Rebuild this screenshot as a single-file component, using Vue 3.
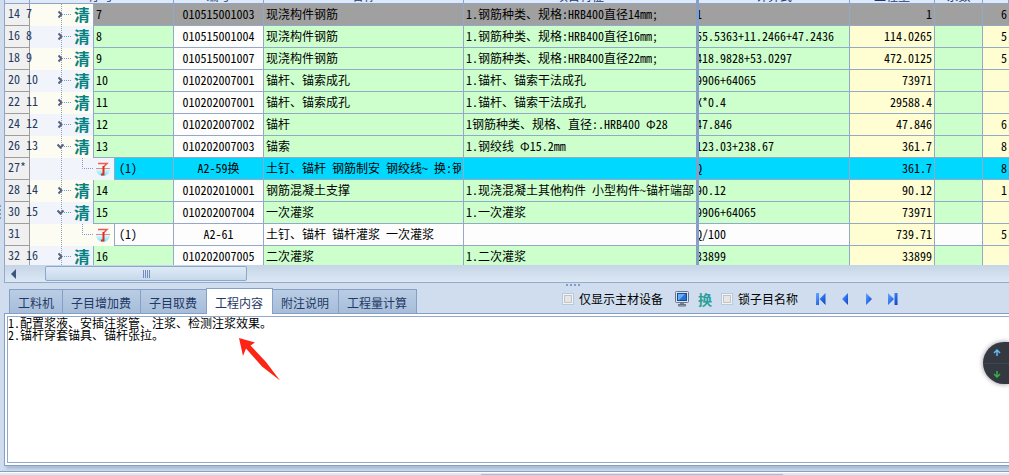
<script setup>
import { ref } from 'vue'

const headers = [
  { t: '', span: 1 },
  { t: '序号', span: 3 },
  { t: '编号', span: 1 },
  { t: '名称', span: 1 },
  { t: '项目特征', span: 1 },
  { t: '计算式', span: 1 },
  { t: '工程量', span: 1 },
  { t: '系数', span: 1 },
  { t: '', span: 1 },
]

const rows = [
  { line: '14 7', no: '7', code: '010515001003', name: '现浇构件钢筋', feat: '1.钢筋种类、规格:HRB400直径14mm;', expr: '1', qty: '1', price: '6,', gray: true },
  { line: '16 8', no: '8', code: '010515001004', name: '现浇构件钢筋', feat: '1.钢筋种类、规格:HRB400直径16mm;', expr: '55.5363+11.2466+47.2436', qty: '114.0265', price: '5,' },
  { line: '18 9', no: '9', code: '010515001007', name: '现浇构件钢筋', feat: '1.钢筋种类、规格:HRB400直径22mm;', expr: '418.9828+53.0297', qty: '472.0125', price: '5,' },
  { line: '20 10', no: '10', code: '010202007001', name: '锚杆、锚索成孔', feat: '1.锚杆、锚索干法成孔', expr: '9906+64065', qty: '73971', price: '' },
  { line: '22 11', no: '11', code: '010202007001', name: '锚杆、锚索成孔', feat: '1.锚杆、锚索干法成孔', expr: 'X*0.4', qty: '29588.4', price: '' },
  { line: '24 12', no: '12', code: '010202007002', name: '锚杆', feat: '1钢筋种类、规格、直径:.HRB400 Φ28', expr: '47.846', qty: '47.846', price: '6,' },
  { line: '26 13', no: '13', code: '010202007003', name: '锚索', feat: '1.钢绞线 Φ15.2mm', expr: '123.03+238.67', qty: '361.7', price: '8,', open: true },
  { line: '27*', no: '(1)', code: 'A2-59换', name: '土钉、锚杆 钢筋制安 钢绞线~ 换:钢绞线', feat: '', expr: 'Q', qty: '361.7', price: '8,', child: true, selected: true },
  { line: '28 14', no: '14', code: '010202010001', name: '钢筋混凝土支撑', feat: '1.现浇混凝土其他构件 小型构件~锚杆端部', expr: '90.12', qty: '90.12', price: '1,' },
  { line: '30 15', no: '15', code: '010202007004', name: '一次灌浆', feat: '1.一次灌浆', expr: '9906+64065', qty: '73971', price: '', open: true },
  { line: '31', no: '(1)', code: 'A2-61', name: '土钉、锚杆 锚杆灌浆 一次灌浆', feat: '', expr: 'Q/100', qty: '739.71', price: '5,', child: true },
  { line: '32 16', no: '16', code: '010202007005', name: '二次灌浆', feat: '1.二次灌浆', expr: '33899', qty: '33899', price: '' },
]

const tabs = ['工料机', '子目增加费', '子目取费', '工程内容', '附注说明', '工程量计算']
const active = ref('工程内容')
const content = ref('1.配置浆液、安插注浆管、注浆、检测注浆效果。\n2.锚杆穿套锚具、锚杆张拉。')
const onlyMain = ref(false)
const lockName = ref(false)
</script>

<template>
  <div class="app">
    <div class="side"><span class="grip"></span></div>
    <main class="main">
      <section class="grid">
        <table>
          <colgroup>
            <col class="c-line" /><col class="c-tree" /><col class="c-indent" /><col class="c-no" />
            <col class="c-code" /><col class="c-name" /><col class="c-feat" /><col class="c-expr" />
            <col class="c-qty" /><col class="c-coef" /><col />
          </colgroup>
          <thead>
            <tr>
              <th v-for="(h, i) in headers" :key="i" :colspan="h.span" :class="{ split: i === 4 }"><div>{{ h.t }}</div></th>
            </tr>
          </thead>
          <tbody>
            <tr v-for="r in rows" :key="r.line" :class="{ gray: r.gray, child: r.child, selected: r.selected }">
              <td class="line"><div>{{ r.line }}</div></td>
              <td class="tree" :colspan="r.child ? 2 : 1">
                <div v-if="!r.child" class="node">
                  <svg width="44" height="22" viewBox="0 0 44 22" fill="none">
                    <path d="M31.5 0V22" stroke="#8fa0c4" stroke-dasharray="1 1" />
                    <path d="M34 10.500H42" stroke="#7f9cc8" stroke-dasharray="1 1" />
                    <path v-if="r.open" d="M27.500 8.500L30.500 11.500L33.500 8.500" stroke="#566180" stroke-width="2" />
                    <path v-else d="M28.500 7.500L31.500 10.500L28.500 13.500" stroke="#566180" stroke-width="2" />
                  </svg>
                  <b>清</b>
                </div>
                <div v-else class="node">
                  <svg width="84" height="22" viewBox="0 0 84 22" fill="none">
                    <defs>
                      <linearGradient id="ball" x1="0" y1="0" x2="0" y2="1">
                        <stop offset="0" stop-color="#fdf3f1" />
                        <stop offset=".45" stop-color="#e9fbfd" />
                        <stop offset="1" stop-color="#6fe6f4" />
                      </linearGradient>
                    </defs>
                    <path d="M31.500 0V22" stroke="#8fa0c4" stroke-dasharray="1 1" />
                    <path d="M52.500 0V10.500H64" stroke="#7f9cc8" stroke-dasharray="1 1" />
                    <circle cx="73" cy="11" r="7" fill="url(#ball)" />
                    <path d="M68 5.500H77L74 8.500" stroke="#ee5a50" stroke-width="1.500" />
                    <path d="M66 10.500H80" stroke="#f0857c" stroke-width="1" />
                    <path d="M73.500 8V16.500H71" stroke="#e32a20" stroke-width="2" />
                  </svg>
                </div>
              </td>
              <td class="no" :colspan="r.child ? 1 : 2"><div>{{ r.no }}</div></td>
              <td class="code"><div>{{ r.code }}</div></td>
              <td><div>{{ r.name }}</div></td>
              <td class="split"><div>{{ r.feat }}</div></td>
              <td class="expr"><div>{{ r.expr }}</div></td>
              <td class="qty"><div>{{ r.qty }}</div></td>
              <td></td>
              <td class="price"><div>{{ r.price }}</div></td>
            </tr>
          </tbody>
        </table>
      </section>
      <div class="hscroll">
        <button class="left" aria-label="向左滚动"></button>
        <div class="thumb"><i></i><i></i><i></i><i></i></div>
      </div>
      <div class="bar">
        <span class="dots"><i></i><i></i><i></i><i></i></span>
        <nav class="tabs" role="tablist">
          <button v-for="t in tabs" :key="t" role="tab" :aria-selected="active === t" :class="{ on: active === t }" @click="active = t">{{ t }}</button>
        </nav>
        <div class="tools">
          <label><input v-model="onlyMain" type="checkbox" /><span>仅显示主材设备</span></label>
          <button class="screen" aria-label="屏幕">
            <svg width="16" height="16" viewBox="0 0 16 16">
              <rect x="1.500" y=".5" width="13" height="11" rx="1" fill="#dfe3ea" stroke="#66758f" />
              <rect x="3.500" y="2.500" width="9" height="7" fill="#2373d8" stroke="#174a98" />
              <path d="M4 3H11L5 9H4Z" fill="#6aaef2" />
              <path d="M6 12H10V13H6Z" fill="#7b8798" />
              <path d="M4.500 13.500H11.500V15H4.500Z" fill="#b9c1cd" stroke="#5f6b7e" />
            </svg>
          </button>
          <button class="swap">换</button>
          <label><input v-model="lockName" type="checkbox" /><span>锁子目名称</span></label>
          <div class="nav">
            <button aria-label="第一条">
              <svg width="10" height="12" viewBox="0 0 10 12"><path d="M0 0H3V12H0ZM9.500 0V12L3.500 6Z" fill="url(#blue)" /></svg>
            </button>
            <button aria-label="上一条">
              <svg width="10" height="12" viewBox="0 0 10 12"><path d="M8 0V12L2 6Z" fill="url(#blue)" /></svg>
            </button>
            <button aria-label="下一条">
              <svg width="10" height="12" viewBox="0 0 10 12"><path d="M2 0V12L8 6Z" fill="url(#blue)" /></svg>
            </button>
            <button aria-label="最后一条">
              <svg width="10" height="12" viewBox="0 0 10 12">
                <defs>
                  <linearGradient id="blue" x1="0" y1="0" x2="1" y2="1">
                    <stop offset="0" stop-color="#6aa8ff" />
                    <stop offset=".6" stop-color="#2468e8" />
                    <stop offset="1" stop-color="#1744b0" />
                  </linearGradient>
                </defs>
                <path d="M6.500 0H9.500V12H6.500ZM0 0V12L6 6Z" fill="url(#blue)" />
              </svg>
            </button>
          </div>
        </div>
      </div>
      <section class="page">
        <textarea v-model="content" aria-label="工程内容" spellcheck="false"></textarea>
        <svg class="arrow" width="44" height="46" viewBox="0 0 44 46">
          <path d="M1 1L17 5.500L12.500 8.500L28 25L42 43.500L24 29.500L8 11.500L5 19Z" fill="#fd2416" />
        </svg>
        <div class="pill">
          <button aria-label="向上"><svg width="8" height="8" viewBox="0 0 8 8" fill="none" stroke="#5cbcf5" stroke-width="1.500"><path d="M4 7V1.500M1 4L4 1L7 4" /></svg></button>
          <button aria-label="向下"><svg width="8" height="8" viewBox="0 0 8 8" fill="none" stroke="#35b04a" stroke-width="1.500"><path d="M4 1V6.500M1 4L4 7L7 4" /></svg></button>
        </div>
      </section>
    </main>
    <footer><span></span></footer>
  </div>
</template>

<style>
body { background: #d0ddee; }
</style>

<style scoped>
.app {
  display: grid;
  grid-template-columns: 4px minmax(0, 1fr);
  grid-template-rows: minmax(0, 1fr) auto;
  height: 100vh;
  overflow: hidden;
  background: #d0ddee;
  color: #000;
  font: 12px/18px "Noto Sans Mono CJK SC", "Liberation Mono", "Noto Sans CJK SC", monospace;
}
.app * { box-sizing: border-box; }
button { padding: 0; border: 0; background: none; color: inherit; font: inherit; }
.side { display: flex; align-items: center; }
.grip { width: 1px; height: 14px; margin-bottom: 48px; background: repeating-linear-gradient(#7f9dc6 0 2px, transparent 2px 4px); }
.main { display: flex; flex-direction: column; min-width: 0; min-height: 0; }
.grid { flex: 0 0 auto; height: 265px; overflow: hidden; border-left: 1px solid #8fa6c6; background: #fff; }
table { width: 100%; table-layout: fixed; border-collapse: separate; border-spacing: 0; }
.c-line { width: 25px; }
.c-tree { width: 64px; }
.c-indent { width: 21px; }
.c-no { width: 59px; }
.c-code { width: 90px; }
.c-name { width: 200px; }
.c-feat { width: 235px; }
.c-expr { width: 151px; }
.c-qty { width: 85px; }
.c-coef { width: 48px; }
th { height: 4px; padding: 0; border: solid #8aa5c8; border-width: 0 1px 1px 0; background: #dfe9f7; color: #1f3864; font-weight: 400; }
th div { display: flex; align-items: flex-end; justify-content: center; height: 3px; overflow: hidden; line-height: 15px; }
td { height: 22px; padding: 0 2px 2px; border: solid #94a8c8; border-width: 0 1px 1px 0; background: #ccffcc; white-space: pre; }
td div { overflow: hidden; }
th.split, td.split { border-right: 3px solid #859fc7; }
td.line { padding: 0 0 3px 3px; border-color: #9d9d9d; background: #f0f0f0; color: #1f3864; }
td.line div { position: relative; overflow: visible; }
td.tree { padding: 0; border-bottom: 0; background: #fdfcf3; }
tr:nth-child(even) td.tree { background: #f1f5fb; }
.node { display: flex; align-items: flex-start; height: 22px; }
.node svg { flex: none; }
.node b { color: #068181; font-size: 16px; line-height: 20px; }
td.code { background: #fdfdfd; text-align: center; }
td.expr { padding-left: 0; text-indent: -3px; }
td.qty { background: #fffed2; text-align: right; }
td.price { padding: 0 0 2px 18px; border-right: 0; background: #fffed2; }
tr.child td:not(.line, .tree, .qty, .price) { background: #fdfdfd; }
tr.child td.no { padding-left: 4px; }
tr.gray td:not(.line, .tree) { background: #a0a0a0; }
tr.selected td:not(.line, .tree) { background: #00d8ff; }
.hscroll { display: flex; flex: none; align-items: center; height: 18px; border: solid #94abca; border-width: 0 0 1px 1px; background: linear-gradient(#c5d5e7, #dce8f4); }
.left { width: 0; height: 0; margin: 0 29px 0 6px; border: solid transparent; border-width: 5px 5px 5px 0; border-right-color: #3c557d; }
.thumb { display: flex; align-items: center; justify-content: center; gap: 1px; width: 202px; height: 15px; border: 1px solid #8ca7cc; border-radius: 2px; background: linear-gradient(#dfeaf6, #c8d9eb); }
.thumb i { width: 1px; height: 8px; background: #6f8ebb; }
.bar { position: relative; display: flex; flex: none; align-items: flex-end; height: 31px; padding-left: 5px; border-bottom: 1px solid #859fc7; }
.dots { position: absolute; top: 1px; left: 562px; display: flex; gap: 2px; }
.dots i { width: 2px; height: 2px; background: #7f9cc6; }
.tabs { display: flex; align-items: flex-end; }
.tabs button { height: 24px; padding: 3px 8px 0; border: solid #859fc7; border-width: 1px 1px 0; background: linear-gradient(#bacde5, #a6bdd9); color: #1f3864; font-size: 12px; }
.tabs button + button { margin-left: -1px; padding: 3px 9px 0 8px; }
.tabs button.on { position: relative; height: 26px; margin-bottom: -1px; background: #fff; }
.tools { display: flex; align-items: center; height: 28px; margin-left: 145px; }
label { display: flex; align-items: center; gap: 5px; }
input { appearance: none; width: 12px; height: 12px; margin: 0; border: 1px solid #b5c9e2; background: #e6e6e6; box-shadow: inset 0 0 0 1px #f4f4f4, inset 0 0 0 2px #c4c4c4; }
.screen { width: 16px; height: 16px; margin-left: 11px; }
.screen svg, .nav svg { display: block; }
.swap { margin: 0 9px 0 8px; color: #2a9f9a; font-size: 14px; font-weight: 700; }
.nav { display: flex; gap: 14px; margin-left: 18px; }
.page { position: relative; display: flex; flex: 1; min-height: 0; margin-bottom: 5px; padding: 2px 0 2px 2px; border: solid #859fc7; border-width: 0 0 1px 1px; background: #fff; box-shadow: 2px 3px 3px #a9bdd0; }
textarea { flex: 1; margin: 0; padding: 0; border: 1px solid #94a8c8; border-right: 0; outline: 0; background: #fff; color: #000; font: inherit; line-height: 12px; resize: none; }
.arrow { position: absolute; top: 23px; left: 233px; }
.pill { position: absolute; top: 28px; right: 0; width: 26px; height: 42px; border-radius: 21px 0 0 21px; background: #343841; box-shadow: 0 0 5px #8b8b98; }
.pill button { display: flex; align-items: center; justify-content: center; width: 100%; height: 21px; padding-left: 2px; }
.pill button + button { border-top: 1px solid #41454d; }
footer { grid-column: 1 / -1; display: flex; justify-content: center; height: 4px; padding-left: 255px; border-top: 1px solid #859fc7; background: linear-gradient(#fff 1px, #dde8f5 1px); align-items: flex-end; }
footer span { width: 40%; height: 1px; background: #a9bdd6; }
</style>
